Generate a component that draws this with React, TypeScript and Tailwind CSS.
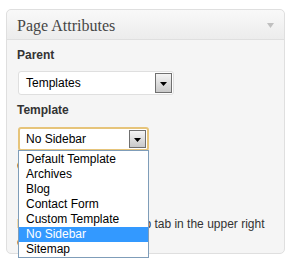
import React from "react";

function DropBtn({ h }: { h: string }) {
  return (
    <div
      className={`w-[17px] ${h} border border-[#707070] bg-gradient-to-b from-[#f4f4f4] to-[#c9c9c9] flex items-center justify-center`}
    >
      <svg width="7" height="4" viewBox="0 0 7 4" className="mt-[2px]">
        <polygon points="0,0 7,0 3.5,4" fill="#000" />
      </svg>
    </div>
  );
}

const items = [
  "Default Template",
  "Archives",
  "Blog",
  "Contact Form",
  "Custom Template",
  "No Sidebar",
  "Sitemap",
];

export default function App() {
  return (
    <div className="w-[292px] h-[267px] bg-white pt-[9px] pl-[6px] font-['Liberation_Sans',Arial,sans-serif]">
      <div className="w-[279px] border border-[#dfdfdf] rounded-[5px] bg-[#f5f5f5] overflow-visible">
        <div className="h-[30px] border-b border-[#dfdfdf] rounded-t-[5px] bg-gradient-to-b from-[#f9f9f9] to-[#ececec] flex items-center justify-between pl-[10px] pr-[10px]">
          <span className="font-['Liberation_Serif',Georgia,serif] text-[16px] leading-[29px] pt-[2px] text-[#464646]">
            Page Attributes
          </span>
          <svg width="7" height="5" viewBox="0 0 7 5" className="mt-[1px]">
            <polygon points="0,0 7,0 3.5,5" fill="#c0c0c0" />
          </svg>
        </div>
        <div className="px-[10px] pt-[8px] pb-[2px] text-[12px]">
          <div className="font-bold text-[#333] leading-[14px]">Parent</div>
          <div className="mt-[9px] ml-[1px] w-[156px] h-[24px] border border-[#dfdfdf] rounded-[3px] bg-white flex items-center justify-between pl-[7px] pr-[1px]">
            <span className="text-black leading-[15px]">Templates</span>
            <DropBtn h="h-[20px]" />
          </div>
          <div className="mt-[8px] font-bold text-[#333] leading-[14px]">Template</div>
          <div className="relative mt-[10px] ml-[1px] w-[131px]">
            <div className="w-[131px] h-[24px] border-2 border-[#e6c47a] rounded-[3px] bg-white flex items-center justify-between pl-[6px] pr-[1px]">
              <span className="text-black leading-[15px]">No Sidebar</span>
              <DropBtn h="h-[18px]" />
            </div>
            <div className="absolute left-0 top-[23px] w-[131px] h-[108px] border border-[#7f9db9] bg-white pt-[1px] z-10">
              {items.map((it) => (
                <div
                  key={it}
                  className={`h-[15px] leading-[15px] pl-[7px] ${
                    it === "No Sidebar" ? "bg-[#3399ff] text-white" : "text-black"
                  }`}
                >
                  {it}
                </div>
              ))}
            </div>
          </div>
          <div className="mt-[8px] font-bold text-[#333] leading-[14px]">Order</div>
          <div className="mt-[8px] ml-[1px] w-[40px] h-[22px] border border-[#dfdfdf] rounded-[3px] bg-white pl-[6px] leading-[20px] text-black">
            0
          </div>
          <p className="mt-[12px] text-[#333] leading-[18px]">
            Need help? Use the Help tab in the upper right of your screen.
          </p>
        </div>
      </div>
    </div>
  );
}
